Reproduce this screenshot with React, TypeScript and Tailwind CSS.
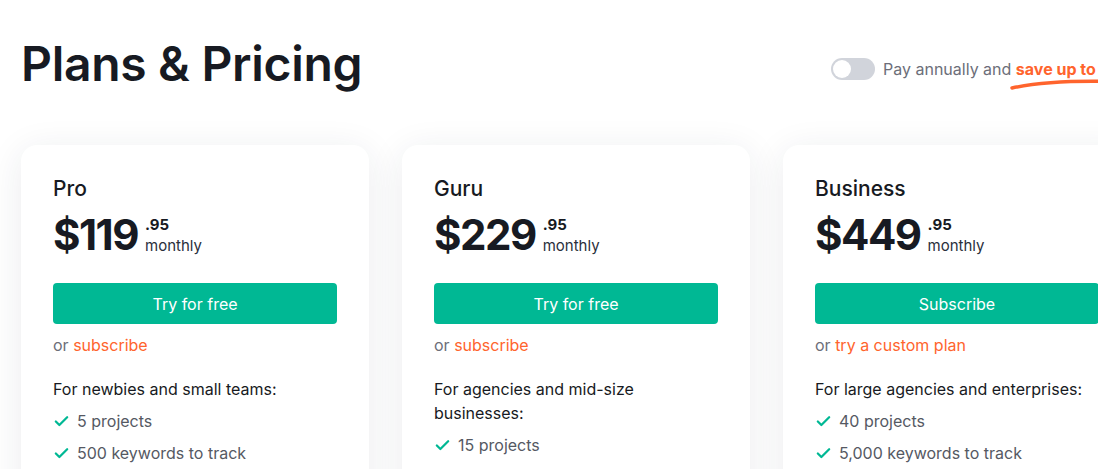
import { Check } from "lucide-react"

type Plan = {
  name: string
  price: string
  cta: string
  alt: string
  audience: string
  features: string[]
}

const plans: Plan[] = [
  {
    name: "Pro",
    price: "$119",
    cta: "Try for free",
    alt: "subscribe",
    audience: "For newbies and small teams:",
    features: ["5 projects", "500 keywords to track", "10,000 results per report"],
  },
  {
    name: "Guru",
    price: "$229",
    cta: "Try for free",
    alt: "subscribe",
    audience: "For agencies and mid-size businesses:",
    features: ["15 projects", "1,500 keywords to track"],
  },
  {
    name: "Business",
    price: "$449",
    cta: "Subscribe",
    alt: "try a custom plan",
    audience: "For large agencies and enterprises:",
    features: ["40 projects", "5,000 keywords to track", "50,000 results per report"],
  },
]

function PlanCard({ plan }: { plan: Plan }) {
  return (
    <div className="w-[348px] shrink-0 rounded-2xl bg-white px-8 pt-[30px] pb-10 shadow-[0_6px_36px_rgba(30,40,70,0.09)]">
      <h2 className="text-[21px] leading-7 font-medium text-[#171a22]">{plan.name}</h2>

      {/* price */}
      <div className="mt-[6px] flex items-start gap-[7px]">
        <span className="text-[42px] leading-[52px] font-bold tracking-[-1.5px] text-[#171a22]">{plan.price}</span>
        <div className="flex flex-col pt-[8px]">
          <span className="text-[15px] leading-[16px] font-bold text-[#171a22]">.95</span>
          <span className="mt-[4px] text-[15px] leading-[18px] text-[#2a2f3c]">monthly</span>
        </div>
      </div>

      <button className="mt-[22px] h-[41px] w-full rounded-[4px] bg-[#00b894] text-[16px] text-white">
        {plan.cta}
      </button>

      <p className="mt-[9px] text-[16px] leading-6 text-[#6c6e79]">
        or <span className="text-[#ff642d]">{plan.alt}</span>
      </p>

      <p className="mt-5 text-[16px] leading-6 text-[#171a22]">{plan.audience}</p>

      <ul className="mt-2 flex flex-col gap-2">
        {plan.features.map((f) => (
          <li key={f} className="flex items-center gap-[7px] text-[16px] leading-6 text-[#555963]">
            <Check size={17} strokeWidth={3.2} className="text-[#00b894]" />
            {f}
          </li>
        ))}
      </ul>
    </div>
  )
}

export default function App() {
  return (
    <div className="h-[469px] w-full overflow-hidden bg-white font-['Inter',sans-serif]">
      <div className="w-[1200px] pl-[21px]">
        {/* header */}
        <div className="flex items-center pt-[34px]">
          <h1 className="w-[340px] shrink-0 text-[48px] leading-[60px] font-semibold tracking-[-0.3px] whitespace-nowrap text-[#171a22]">
            Plans &amp; Pricing
          </h1>
          <div className="ml-[470px] flex shrink-0 items-center gap-2 pt-[10px] whitespace-nowrap">
            <div className="flex h-[22px] w-[44px] items-center rounded-full bg-[#d1d4db] px-[2px]">
              <div className="h-[18px] w-[18px] rounded-full bg-white" />
            </div>
            <span className="text-[16px] text-[#6c6e79]">
              Pay annually and{" "}
              <span className="relative font-bold text-[#ff642d]">
                save up to 16%
                <svg
                  className="absolute top-[20px] -left-[6px]"
                  width="120"
                  height="12"
                  viewBox="0 0 120 12"
                  fill="none"
                >
                  <path d="M2 9 C30 3, 70 1, 118 3" stroke="#ff642d" strokeWidth="3.5" strokeLinecap="round" />
                </svg>
              </span>
            </span>
          </div>
        </div>

        {/* plans */}
        <div className="mt-[51px] flex gap-[33px]">
          {plans.map((p) => (
            <PlanCard key={p.name} plan={p} />
          ))}
        </div>
      </div>
    </div>
  )
}
